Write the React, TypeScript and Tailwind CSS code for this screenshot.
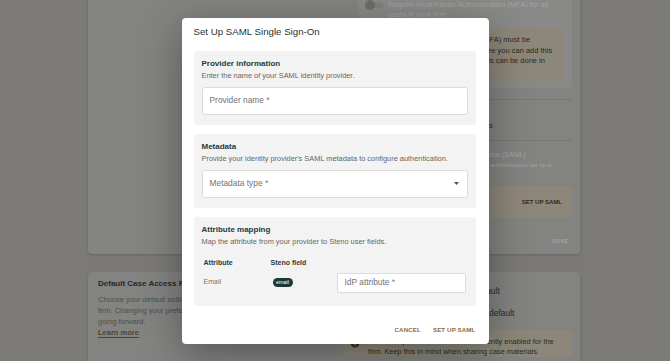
import React from "react";

function Toggle() {
  return (
    <div className="relative h-[10px] w-[18px] shrink-0">
      <div className="absolute left-[3px] top-[2px] h-[6px] w-[15px] rounded-full bg-[#7f7f7d]" />
      <div className="absolute left-0 top-0 h-[10px] w-[10px] rounded-full bg-[#6c6c6a]" />
    </div>
  );
}

function InfoIcon() {
  return (
    <svg width="10" height="10" viewBox="0 0 10 10" className="mt-[1px] shrink-0">
      <circle cx="5" cy="5" r="4.5" fill="#3b3528" />
      <rect x="4.4" y="4.2" width="1.2" height="3.4" fill="#8c8779" />
      <rect x="4.4" y="2.4" width="1.2" height="1.2" fill="#8c8779" />
    </svg>
  );
}

function Section({
  title,
  desc,
  children,
  className = "",
}: {
  title: string;
  desc: string;
  children: React.ReactNode;
  className?: string;
}) {
  return (
    <div className={`rounded-[3px] bg-[#f3f3f3] px-[8px] pt-[8px] ${className}`}>
      <h3 className="text-[8px] font-bold leading-[10px] text-[#263a38]">{title}</h3>
      <p className="mt-[2px] whitespace-nowrap text-[7.4px] leading-[10px] text-[#666666]">{desc}</p>
      {children}
    </div>
  );
}

function Modal() {
  return (
    <div className="w-[307px] rounded-[4px] bg-white pb-[6px] pl-[12px] pr-[13px] pt-[7px] shadow-[0_10px_40px_rgba(0,0,0,0.35)]">
      <h2 className="text-[9.7px] leading-[14px] text-[#1f3331]">Set Up SAML Single Sign-On</h2>
      <div className="mt-[12px] flex flex-col gap-[9px]">
        <Section title="Provider information" desc="Enter the name of your SAML identity provider." className="pb-[10px]">
          <div className="mt-[6px] flex h-[28px] items-center rounded-[3px] border border-[#dcdcdc] bg-white pl-[7px] text-[8.4px] text-[#737373]">
            Provider name *
          </div>
        </Section>
        <Section
          title="Metadata"
          desc="Provide your identity provider's SAML metadata to configure authentication."
          className="pb-[10px]"
        >
          <div className="mt-[6px] flex h-[28px] items-center justify-between rounded-[3px] border border-[#dcdcdc] bg-white pl-[7px] pr-[8px] text-[8.4px] text-[#737373]">
            <span>Metadata type *</span>
            <svg width="5" height="3" viewBox="0 0 5 3">
              <path d="M0 0 L5 0 L2.5 3 Z" fill="#555555" />
            </svg>
          </div>
        </Section>
        <Section
          title="Attribute mapping"
          desc="Map the attribute from your provider to Steno user fields."
          className="pb-[13px]"
        >
          <div className="mt-[11px] grid grid-cols-[67px_66px_1fr] px-[2px] text-[7px] leading-[10px]">
            <span className="font-bold text-[#2f3b3a]">Attribute</span>
            <span className="font-bold text-[#2f3b3a]">Steno field</span>
            <span />
          </div>
          <div className="mt-[5px] grid grid-cols-[67px_66px_1fr] items-center px-[2px]">
            <span className="text-[7px] text-[#767676]">Email</span>
            <span className="ml-[2px] flex h-[9px] w-[20px] items-center justify-center rounded-full bg-[#1c3832] text-[5.5px] leading-none text-white">
              email
            </span>
            <div className="flex h-[20px] items-center rounded-[2px] border border-[#dcdcdc] bg-white pl-[7px] text-[8.4px] text-[#737373]">
              IdP attribute *
            </div>
          </div>
        </Section>
      </div>
      <div className="flex justify-end gap-[12px] pt-[16px]">
        <button className="h-[16px] text-[6.2px] font-bold tracking-[0.1px] text-[#8a6d45]">CANCEL</button>
        <button className="h-[16px] text-[6.2px] font-bold tracking-[0.1px] text-[#8a6d45]">SET UP SAML</button>
      </div>
    </div>
  );
}

function TopCard() {
  return (
    <div className="-mt-[30px] flex rounded-[4px] bg-[#838381] pb-[8px] pl-[10px] pr-[8px] pt-[10px] shadow-[0_1px_3px_rgba(0,0,0,0.18)]">
      <div className="w-[260px] shrink-0" />
      <div className="flex w-[214px] flex-col">
        <div className="rounded-[3px] bg-[#898987] pb-[6px] pl-[7px] pr-[9px] pt-[20px]">
          <div className="flex gap-[5px]">
            <Toggle />
            <p className="whitespace-nowrap text-[7.5px] leading-[10px] text-[#a3a3a1]">
              Require Multi-Factor Authentication (MFA) for all
              <br />
              users in your firm.
            </p>
          </div>
          <div className="mt-[8px] flex h-[54px] gap-[8px] rounded-[3px] bg-[#8c8779] pl-[7px] pt-[7px]">
            <InfoIcon />
            <p className="whitespace-nowrap text-[7.5px] leading-[10.5px] text-[#2e2a20]">
              Multi-Factor Authentication (MFA) must be
              <br />
              enabled for all firm users before you can add this
              <br />
              a Single Sign-On provider. This can be done in
              <br />
              Security settings.
            </p>
          </div>
        </div>
        <div className="mt-[11px] flex items-center gap-[6px] border-y border-[#777775] pb-[9px] pt-[21px]">
          <div className="h-[10px] w-[10px] shrink-0 rounded-[2px] border border-[#5a5a58]" />
          <span className="whitespace-nowrap text-[7.5px] leading-[10px] text-[#2b2c2a]">
            Require MFA for experts and clients
          </span>
        </div>
        <div className="flex gap-[5px] pt-[9px]">
          <Toggle />
          <div>
            <p className="whitespace-nowrap text-[7px] leading-[10px] text-[#a3a3a1]">
              Require sign in with an identity service (SAML)
            </p>
            <p className="whitespace-nowrap text-[6px] leading-[10px] text-[#a3a3a1]">
              Your firm must already have Multi-Factor authentication set up to
            </p>
          </div>
        </div>
        <div className="mt-[16px] flex h-[32px] items-center justify-end rounded-[3px] bg-[#8c8779] pr-[10px]">
          <span className="text-[6px] font-bold text-[#2e2a20]">SET UP SAML</span>
        </div>
        <div className="mt-[18px] pr-[4px] text-right text-[6px] font-bold leading-[10px] text-[#a3a3a1]">SAVE</div>
      </div>
    </div>
  );
}

function BottomCard() {
  return (
    <div className="flex h-[120px] gap-[20px] rounded-[4px] bg-[#838381] pl-[10px] pr-[8px] pt-[7px] shadow-[0_1px_3px_rgba(0,0,0,0.18)]">
      <div className="w-[225px] shrink-0">
        <h3 className="whitespace-nowrap text-[8px] font-bold leading-[10px] text-[#262a29]">
          Default Case Access Preferences
        </h3>
        <p className="mt-[5px] whitespace-nowrap text-[7.5px] leading-[11px] text-[#4f4f4d]">
          Choose your default settings for case access in your
          <br />
          firm. Changing your preference will apply to cases
          <br />
          going forward.
        </p>
        <a className="mt-[1px] block w-fit border-b border-[#4e4434] text-[7.5px] font-bold leading-[9px] text-[#4e4434]">
          Learn more
        </a>
      </div>
      <div className="flex flex-1 flex-col pt-[7px]">
        <div className="flex items-center gap-[6px] pl-[2px]">
          <div className="h-[9px] w-[9px] rounded-full border border-[#4a4a48]" />
          <span className="whitespace-nowrap text-[8.5px] leading-[10px] text-[#262a29]">Make new cases restricted by default</span>
        </div>
        <div className="mt-[12px] flex items-center gap-[6px] pl-[2px]">
          <div className="h-[9px] w-[9px] rounded-full border-[3px] border-[#2b2c2a]" />
          <span className="whitespace-nowrap text-[8.5px] leading-[10px] text-[#262a29]">Make new cases visible to firm by default</span>
        </div>
        <div className="mt-[12px] flex gap-[8px] rounded-[3px] bg-[#8c8779] pl-[7px] pt-[7px]">
          <InfoIcon />
          <p className="whitespace-nowrap text-[7.4px] leading-[10px] text-[#2e2a20]">
            Firm-wide public case access is currently enabled for the
            <br />
            firm. Keep this in mind when sharing case materials.
          </p>
        </div>
      </div>
    </div>
  );
}

export default function App() {
  return (
    <div className="relative h-[361px] w-[670px] overflow-hidden bg-[#7b7a77] font-['Liberation_Sans',Arial,sans-serif]">
      <div className="flex w-[580px] flex-col gap-[18px] pl-[88px]">
        <TopCard />
        <BottomCard />
      </div>
      <div className="absolute inset-0 flex items-center justify-center">
        <Modal />
      </div>
    </div>
  );
}
